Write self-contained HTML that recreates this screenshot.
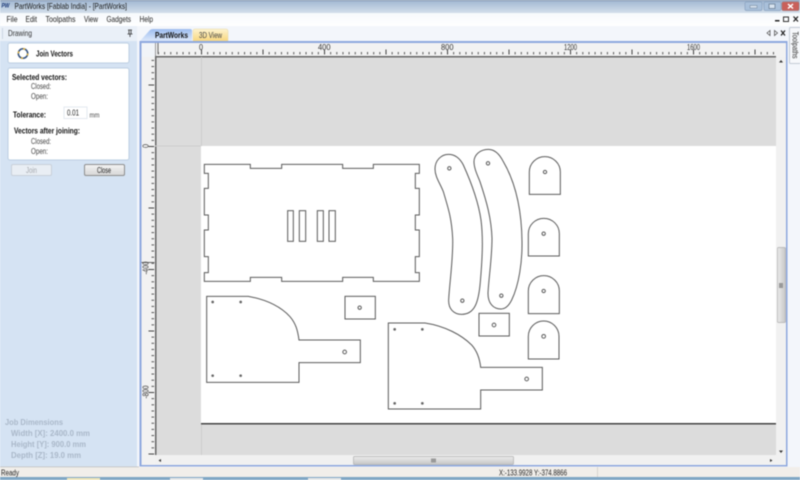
<!DOCTYPE html>
<html><head><meta charset="utf-8"><style>
html,body{margin:0;padding:0;width:800px;height:480px;overflow:hidden;background:#f3f6fb}
svg{display:block;filter:blur(.4px)}
text{font-family:"Liberation Sans",sans-serif;font-size:8.5px;fill:#222}
.b{font-weight:bold;fill:#111}
.g{font-weight:bold;fill:#aab8c9;font-size:8.5px}
.r{font-size:8px;fill:#333}
.s{fill:none;stroke:#5a5a5a;stroke-width:3}
</style></head><body>
<svg width="800" height="480" viewBox="0 0 800 480" xmlns="http://www.w3.org/2000/svg">
<defs>
<linearGradient id="tb" x1="0" y1="0" x2="0" y2="1"><stop offset="0" stop-color="#9fb6d1"/><stop offset="1" stop-color="#d3dfeb"/></linearGradient>
<linearGradient id="mn" x1="0" y1="0" x2="0" y2="1"><stop offset="0" stop-color="#f6f9fc"/><stop offset="1" stop-color="#ffffff"/></linearGradient>
<linearGradient id="t1" x1="0" y1="0" x2="0" y2="1"><stop offset="0" stop-color="#9dbdf0"/><stop offset="1" stop-color="#dce8fa"/></linearGradient>
<linearGradient id="t2" x1="0" y1="0" x2="0" y2="1"><stop offset="0" stop-color="#fdf3cf"/><stop offset="1" stop-color="#f8d77e"/></linearGradient>
<linearGradient id="btn" x1="0" y1="0" x2="0" y2="1"><stop offset="0" stop-color="#f4f4f4"/><stop offset="1" stop-color="#d6d6d6"/></linearGradient>
<linearGradient id="hs" x1="0" y1="0" x2="0" y2="1"><stop offset="0" stop-color="#ececec"/><stop offset="1" stop-color="#c6c6c6"/></linearGradient>
<linearGradient id="vs" x1="0" y1="0" x2="1" y2="0"><stop offset="0" stop-color="#ececec"/><stop offset="1" stop-color="#c6c6c6"/></linearGradient>
<pattern id="tmin" x="201" y="0" width="6.15" height="480" patternUnits="userSpaceOnUse"><rect x="0" y="52" width="1" height="2.4" fill="#555"/></pattern>
<pattern id="tmaj" x="201" y="0" width="61.5" height="480" patternUnits="userSpaceOnUse"><rect x="0" y="49.5" width="1" height="5" fill="#444"/></pattern>
<pattern id="lmin" x="0" y="146" width="480" height="6.15" patternUnits="userSpaceOnUse"><rect x="151.5" y="0" width="2.6" height="1" fill="#555"/></pattern>
<pattern id="lmaj" x="0" y="146" width="480" height="61.5" patternUnits="userSpaceOnUse"><rect x="148.5" y="0" width="5.6" height="1" fill="#444"/></pattern>
</defs>

<rect width="800" height="480" fill="#f3f6fb"/>
<!-- title bar -->
<rect width="800" height="13" fill="url(#tb)"/>
<rect width="800" height="1" fill="#7f93ad"/>
<text x="1.5" y="7.5" textLength="8" lengthAdjust="spacingAndGlyphs" style="font-size:6.5px;font-weight:bold;font-style:italic;fill:#1d3a78">PW</text>
<text x="14.5" y="9" textLength="112.5" lengthAdjust="spacingAndGlyphs" style="font-size:8.5px;fill:#1a1a1a">PartWorks [Fablab India] - [PartWorks]</text>
<rect x="745" y="2" width="17" height="8.5" rx="1.5" fill="#a9c0da" stroke="#8aa2bf" stroke-width=".7"/>
<rect x="750" y="5.5" width="7" height="2.5" fill="#d8e4ef" stroke="#6c7f96" stroke-width=".5"/>
<rect x="764" y="2" width="17" height="8.5" rx="1.5" fill="#a9c0da" stroke="#8aa2bf" stroke-width=".7"/>
<rect x="769" y="4" width="6" height="4.5" fill="#d8e4ef" stroke="#6c7f96" stroke-width=".8"/>
<rect x="782" y="2" width="17" height="8.5" rx="1.5" fill="#c9605a" stroke="#a9706e" stroke-width=".7"/>
<path d="M788 4L793 8.5M793 4L788 8.5" stroke="#fff" stroke-width="1.5"/>

<!-- menu -->
<rect y="13" width="800" height="13" fill="url(#mn)"/>
<text x="6.5" y="22" textLength="11" lengthAdjust="spacingAndGlyphs">File</text>
<text x="25.5" y="22" textLength="11.5" lengthAdjust="spacingAndGlyphs">Edit</text>
<text x="45.5" y="22" textLength="30" lengthAdjust="spacingAndGlyphs">Toolpaths</text>
<text x="84" y="22" textLength="14" lengthAdjust="spacingAndGlyphs">View</text>
<text x="106.5" y="22" textLength="24.5" lengthAdjust="spacingAndGlyphs">Gadgets</text>
<text x="139.5" y="22" textLength="13.5" lengthAdjust="spacingAndGlyphs">Help</text>
<rect x="775" y="20" width="4.5" height="1.5" fill="#222"/>
<rect x="783.5" y="17" width="5" height="4.5" fill="none" stroke="#333" stroke-width="1"/>
<path d="M793.5 16.5L798 21.5M798 16.5L793.5 21.5" stroke="#222" stroke-width="1.3"/>

<!-- right top strip icons -->
<rect x="139" y="26" width="661" height="15" fill="#f3f6fb"/>
<path d="M770 30.5L767 33L770 35.5Z" fill="none" stroke="#555" stroke-width=".8"/>
<path d="M774.5 30.5L777.5 33L774.5 35.5Z" fill="none" stroke="#555" stroke-width=".8"/>
<path d="M781 30.5L785 35.5M785 30.5L781 35.5" stroke="#222" stroke-width="1.2"/>

<!-- left panel -->
<rect x="0" y="26" width="137" height="441" fill="#d5e3f3"/>
<rect x="0" y="26" width="137" height="15" fill="#eaf0f8"/>
<rect x="2" y="28" width="1" height="11" fill="#ccd6e2"/>
<text x="8" y="36" textLength="24" lengthAdjust="spacingAndGlyphs" style="font-size:8.5px;fill:#333">Drawing</text>
<path d="M128 30h4M129 30v4h2v-4M130 34v3M127.5 34h5" stroke="#333" stroke-width=".8" fill="none"/>
<rect x="8" y="43" width="121" height="20" rx="2" fill="#fff" stroke="#bccee2"/>
<rect x="8" y="68" width="121" height="92" rx="2" fill="#fff" stroke="#bccee2"/>
<circle cx="23" cy="53.5" r="4.7" fill="none" stroke="#33507c" stroke-width="1.5"/>
<circle cx="23" cy="53.5" r="4.7" fill="none" stroke="#e5b53a" stroke-width="1.5" stroke-dasharray="2 5.4"/>
<text x="36" y="56.5" class="b" textLength="37" lengthAdjust="spacingAndGlyphs" style="font-size:8.5px">Join Vectors</text>
<text x="12" y="80" class="b" textLength="55" lengthAdjust="spacingAndGlyphs">Selected vectors:</text>
<text x="31" y="89" textLength="20" lengthAdjust="spacingAndGlyphs" style="fill:#444">Closed:</text>
<text x="31" y="99" textLength="17" lengthAdjust="spacingAndGlyphs" style="fill:#444">Open:</text>
<text x="13" y="117.5" class="b" textLength="33" lengthAdjust="spacingAndGlyphs">Tolerance:</text>
<rect x="64" y="107" width="23" height="11.5" fill="#fff" stroke="#e4e9f0"/>
<text x="67" y="115.5" textLength="12" lengthAdjust="spacingAndGlyphs" style="font-size:8px">0.01</text>
<text x="89.5" y="117.5" textLength="10" lengthAdjust="spacingAndGlyphs" style="font-size:7.5px;fill:#444">mm</text>
<text x="14" y="133.5" class="b" textLength="66" lengthAdjust="spacingAndGlyphs">Vectors after joining:</text>
<text x="31" y="144" textLength="20" lengthAdjust="spacingAndGlyphs" style="fill:#444">Closed:</text>
<text x="31" y="154" textLength="17" lengthAdjust="spacingAndGlyphs" style="fill:#444">Open:</text>
<rect x="11.5" y="164.5" width="40" height="11" rx="1.5" fill="#e9eef4" stroke="#c9d0d9"/>
<text x="26" y="173" textLength="11" lengthAdjust="spacingAndGlyphs" style="font-size:8px;fill:#a5a9ae">Join</text>
<rect x="84.5" y="164.5" width="40" height="11" rx="1.5" fill="url(#btn)" stroke="#8e8e8e"/>
<text x="97" y="173" textLength="14" lengthAdjust="spacingAndGlyphs" style="font-size:8px">Close</text>
<text x="5" y="425" class="g" textLength="58" lengthAdjust="spacingAndGlyphs">Job Dimensions</text>
<text x="11" y="436" class="g" textLength="79" lengthAdjust="spacingAndGlyphs">Width  [X]: 2400.0 mm</text>
<text x="11" y="447" class="g" textLength="75" lengthAdjust="spacingAndGlyphs">Height [Y]: 900.0 mm</text>
<text x="11" y="458" class="g" textLength="70" lengthAdjust="spacingAndGlyphs">Depth  [Z]: 19.0 mm</text>

<!-- tabs -->
<path d="M140 41L150 30Q151 29 153 29H190Q192 29 192 31V41Z" fill="url(#t1)"/>
<path d="M193 41V31Q193 29 195 29H226Q228 29 228 31V41Z" fill="url(#t2)" stroke="#e8d9a8" stroke-width=".5"/>
<text x="155" y="38" class="b" textLength="33" lengthAdjust="spacingAndGlyphs">PartWorks</text>
<text x="199" y="38" textLength="23" lengthAdjust="spacingAndGlyphs" style="fill:#444">3D View</text>

<!-- toolpaths tab -->
<rect x="789.5" y="27.5" width="11" height="36" rx="1" fill="#f6f8fb" stroke="#c3cbd5"/>
<text transform="translate(792.5,31.5) rotate(90)" textLength="27" lengthAdjust="spacingAndGlyphs" style="font-size:8.5px;fill:#333">Toolpaths</text>

<!-- frame -->
<rect x="139.5" y="41" width="648" height="425.5" fill="#8ea8de"/>
<rect x="141.5" y="43" width="644.5" height="422" fill="#f1f1f1"/>

<!-- rulers -->
<rect x="141.5" y="43" width="13.5" height="14" fill="#f1f4f8"/>
<rect x="155" y="43" width="631" height="14" fill="#f2f2f2"/>
<rect x="141.5" y="57" width="13.5" height="408" fill="#f2f2f2"/>
<rect x="155" y="43" width="621" height="14" fill="url(#tmin)"/>
<rect x="155" y="43" width="621" height="14" fill="url(#tmaj)"/>
<rect x="141.5" y="57" width="13.5" height="398" fill="url(#lmin)"/>
<rect x="141.5" y="57" width="13.5" height="398" fill="url(#lmaj)"/>
<rect x="155" y="43" width="1" height="14" fill="#999"/>
<rect x="157.5" y="43" width="1" height="11" fill="#666"/>
<rect x="141.5" y="262" width="13" height="1" fill="#666"/>
<text class="r" x="199" y="50" textLength="4" lengthAdjust="spacingAndGlyphs">0</text>
<text class="r" x="318" y="50" textLength="12.5" lengthAdjust="spacingAndGlyphs">400</text>
<text class="r" x="441" y="50" textLength="12.5" lengthAdjust="spacingAndGlyphs">800</text>
<text class="r" x="564" y="50" textLength="13" lengthAdjust="spacingAndGlyphs">1200</text>
<text class="r" x="687" y="50" textLength="13" lengthAdjust="spacingAndGlyphs">1600</text>
<text class="r" transform="translate(148.5,148) rotate(-90)" textLength="4" lengthAdjust="spacingAndGlyphs">0</text>
<text class="r" transform="translate(148.5,274.5) rotate(-90)" textLength="13" lengthAdjust="spacingAndGlyphs">-400</text>
<text class="r" transform="translate(148.5,398.5) rotate(-90)" textLength="13" lengthAdjust="spacingAndGlyphs">-800</text>

<!-- canvas -->
<rect x="155" y="57" width="621" height="398" fill="#dcdcdc"/>
<rect x="155" y="56" width="621" height="1.5" fill="#666"/>
<rect x="155" y="56" width="1.5" height="399" fill="#666"/>
<rect x="201" y="146" width="575" height="278" fill="#fff"/>
<rect x="201" y="57" width="1" height="89" fill="#cdcdcd"/>
<rect x="201" y="424" width="1" height="31" fill="#cdcdcd"/>
<rect x="155" y="145.5" width="46" height="1" fill="#cdcdcd"/>
<rect x="201" y="423" width="575" height="1.5" fill="#444"/>

<!-- scrollbars -->
<rect x="776" y="57" width="10" height="408" fill="#f1f1f1"/>
<rect x="155" y="455" width="631" height="10" fill="#f1f1f1"/>
<rect x="777.5" y="247.5" width="8" height="75" rx="1" fill="url(#vs)" stroke="#b0b0b0" stroke-width=".7"/>
<rect x="779" y="283" width="4" height="5" fill="#999"/>
<rect x="353.5" y="456.5" width="160" height="8" rx="1" fill="url(#hs)" stroke="#b0b0b0" stroke-width=".7"/>
<rect x="431" y="458.5" width="5" height="4" fill="#999"/>
<path d="M779 62.5L781 60L783 62.5Z" fill="#333"/>
<path d="M779 450.5L781 453L783 450.5Z" fill="#333"/>
<path d="M161 459L158.5 460.5L161 462Z" fill="#333"/>
<path d="M770 459L772.5 460.5L770 462Z" fill="#333"/>

<!-- drawing: big box -->
<g transform="translate(190,150) scale(.33333)">
<path class="s" d="M43 43H181V55H275V43H458V55H550V43H688V70H676V115H688V195H676V240H688V320H676V368H688V394H550V382H458V394H275V382H181V394H43V368H55V320H43V240H55V195H43V115H55V70H43Z"/>
<rect class="s" x="293" y="182" width="17" height="92"/>
<rect class="s" x="328" y="182" width="19" height="92"/>
<rect class="s" x="382" y="182" width="18" height="92"/>
<rect class="s" x="417" y="182" width="19" height="92"/>
</g>
<!-- bananas + arches -->
<g transform="translate(420,145) scale(.33333)">
<path class="s" d="M45 72C45 45 65 28 85 28C105 28 120 40 130 60C155 115 175 170 183 225C190 280 187 340 181 410C176 470 165 508 125 508C100 508 85 490 86 465C88 420 100 340 98 280C95 220 85 190 70 140C60 115 45 95 45 72Z"/>
<path class="s" d="M162 50C162 30 180 13 205 13C225 13 240 30 250 50C285 110 305 190 306 290C307 350 297 420 275 465C265 485 255 492 243 492C220 492 204 475 204 445C206 400 216 340 216 280C214 220 200 170 180 110C172 90 162 70 162 50Z"/>
<circle class="s" cx="88" cy="70" r="5"/><circle class="s" cx="127" cy="467" r="5"/>
<circle class="s" cx="204" cy="55" r="5"/><circle class="s" cx="244" cy="452" r="5"/>
<path class="s" d="M328 148V81A46.5 46 0 0 1 421 81V148Z"/>
<circle class="s" cx="375" cy="81" r="5"/>
<path class="s" d="M325 333V266A46.5 46 0 0 1 418 266V333Z"/>
<circle class="s" cx="371" cy="266" r="5"/>
<path class="s" d="M325 506V438A46.5 46 0 0 1 418 438V506Z"/>
<circle class="s" cx="371" cy="438" r="5"/>
</g>
<!-- lower-left handle -->
<g transform="translate(195,285) scale(.33333)">
<path class="s" d="M35 34H160C220 45 260 68 285 95C302 115 308 135 312 165H496V233H312V292H35Z"/>
<rect class="s" x="450" y="34" width="91" height="68"/>
<circle class="s" cx="494" cy="68" r="5"/>
<circle class="s" cx="449" cy="201" r="5.5"/>
<circle cx="53" cy="51" r="4" fill="#666"/><circle cx="137" cy="51" r="4" fill="#666"/>
<circle cx="53" cy="272" r="4" fill="#666"/><circle cx="137" cy="272" r="4" fill="#666"/>
</g>
<!-- lower-right handle -->
<g transform="translate(380,310) scale(.33333)">
<path class="s" d="M25 39H135C195 48 245 75 275 105C292 124 299 145 302 172H487V240H302V297H25Z"/>
<rect class="s" x="297" y="10" width="91" height="68"/>
<circle class="s" cx="342" cy="45" r="5.5"/>
<path class="s" d="M445 147V79A46 46 0 0 1 537 79V147Z"/>
<circle class="s" cx="491" cy="79" r="5.5"/>
<circle class="s" cx="440" cy="207" r="5.5"/>
<circle cx="44" cy="58" r="4" fill="#666"/><circle cx="127" cy="58" r="4" fill="#666"/>
<circle cx="44" cy="280" r="4" fill="#666"/><circle cx="127" cy="280" r="4" fill="#666"/>
</g>

<!-- status bar -->
<rect y="467" width="800" height="10" fill="#f1eeea"/>
<rect y="466.5" width="139" height=".7" fill="#bbb"/>
<text x="1" y="475.5" textLength="18" lengthAdjust="spacingAndGlyphs" style="font-size:8px">Ready</text>
<text x="499" y="475.5" textLength="68" lengthAdjust="spacingAndGlyphs" style="font-size:8px">X:-133.9928 Y:-374.8866</text>
<rect x="597" y="467" width="1" height="10" fill="#d8d5d0"/>
<!-- taskbar -->
<rect y="477" width="800" height="3" fill="#7fa6c4"/>
<rect x="67" y="478" width="33" height="2" fill="#f2e7b8"/>
<rect x="170" y="478" width="33" height="2" fill="#e8e8e8"/>
<rect x="308" y="478" width="33" height="2" fill="#e8e8e8"/>
</svg>
</body></html>
